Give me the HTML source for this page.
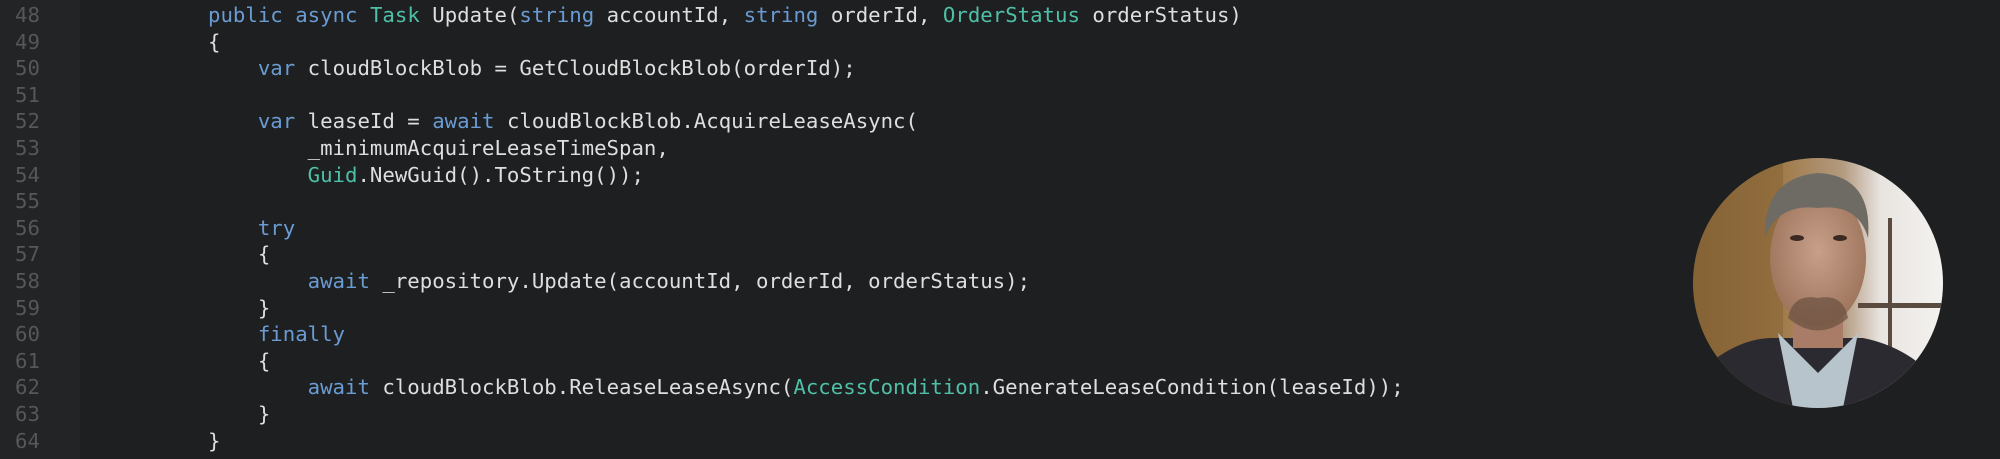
<!DOCTYPE html>
<html><head><meta charset="utf-8"><style>
html,body{margin:0;padding:0}
body{width:2000px;height:459px;background:#1e1f21;position:relative;overflow:hidden;font-family:"DejaVu Sans Mono","Liberation Mono",monospace;}
.gut{position:absolute;left:0;top:0;width:80px;height:459px;background:#232426}
pre{margin:0;position:absolute;font-size:20.7px;line-height:26.6px;font-family:"DejaVu Sans Mono","Liberation Mono",monospace;}
.nums{left:15px;top:2px;color:#55575a}
.code{left:208px;top:2px;color:#dedede}
.k{color:#6a9bd2}.t{color:#4ec0a8}
</style></head><body>
<div class="gut"></div>
<pre class="nums">48
49
50
51
52
53
54
55
56
57
58
59
60
61
62
63
64</pre>
<pre class="code"><span class="k">public</span> <span class="k">async</span> <span class="t">Task</span> Update(<span class="k">string</span> accountId, <span class="k">string</span> orderId, <span class="t">OrderStatus</span> orderStatus)
{
    <span class="k">var</span> cloudBlockBlob = GetCloudBlockBlob(orderId);

    <span class="k">var</span> leaseId = <span class="k">await</span> cloudBlockBlob.AcquireLeaseAsync(
        _minimumAcquireLeaseTimeSpan,
        <span class="t">Guid</span>.NewGuid().ToString());

    <span class="k">try</span>
    {
        <span class="k">await</span> _repository.Update(accountId, orderId, orderStatus);
    }
    <span class="k">finally</span>
    {
        <span class="k">await</span> cloudBlockBlob.ReleaseLeaseAsync(<span class="t">AccessCondition</span>.GenerateLeaseCondition(leaseId));
    }
}</pre>
<svg style="position:absolute;left:1693px;top:158px" width="250" height="250" viewBox="0 0 250 250">
<defs>
<clipPath id="c"><circle cx="125" cy="125" r="125"/></clipPath>
<linearGradient id="bg" x1="0" x2="1" y1="0" y2="0">
<stop offset="0" stop-color="#8a6a3a"/><stop offset="0.35" stop-color="#a07a48"/><stop offset="0.6" stop-color="#b39a80"/><stop offset="0.75" stop-color="#e8e4e0"/><stop offset="1" stop-color="#f4f2f0"/></linearGradient>
<radialGradient id="sk" cx="0.5" cy="0.45" r="0.6"><stop offset="0" stop-color="#c8a08a"/><stop offset="1" stop-color="#9a7058"/></radialGradient>
</defs>
<g clip-path="url(#c)">
<rect width="250" height="250" fill="url(#bg)"/>
<rect x="0" y="0" width="90" height="200" fill="#7d5a30" opacity="0.4"/>
<rect x="195" y="60" width="4" height="140" fill="#5a4a40"/>
<rect x="165" y="145" width="85" height="5" fill="#5a4a40"/>
<path d="M0 220 Q40 180 80 180 L170 180 Q220 190 250 230 L250 250 L0 250Z" fill="#2a2a30"/>
<path d="M85 175 L125 215 L165 175 L150 250 L100 250Z" fill="#b8c4cc"/>
<rect x="100" y="130" width="50" height="60" fill="#a87c66"/>
<ellipse cx="125" cy="100" rx="48" ry="68" fill="url(#sk)"/>
<path d="M72 80 Q70 20 125 15 Q180 18 175 80 Q165 45 125 50 Q85 45 72 80Z" fill="#6e6a64"/>
<path d="M95 160 Q125 185 155 160 Q150 135 125 140 Q100 135 95 160Z" fill="#6a5040" opacity="0.7"/>
<ellipse cx="104" cy="80" rx="7" ry="3" fill="#3a2a22"/>
<ellipse cx="147" cy="80" rx="7" ry="3" fill="#3a2a22"/>
</g>
</svg>
</body></html>
